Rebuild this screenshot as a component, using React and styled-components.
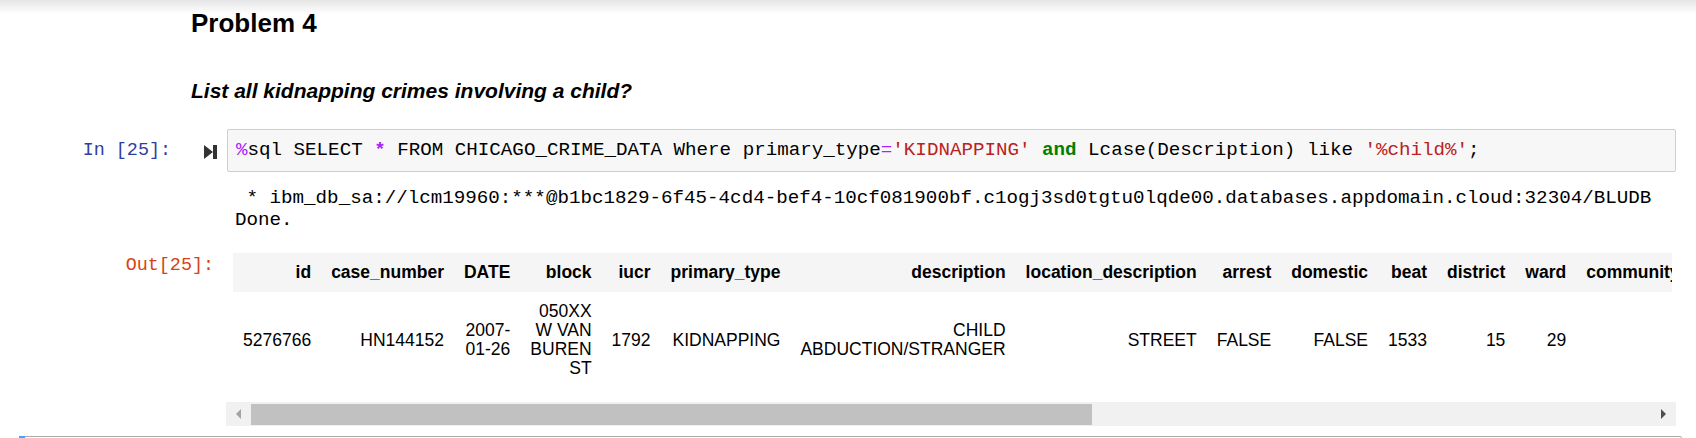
import React from 'react'
import styled, { createGlobalStyle } from 'styled-components'

const columns = [
  'id', 'case_number', 'DATE', 'block', 'iucr', 'primary_type', 'description',
  'location_description', 'arrest', 'domestic', 'beat', 'district', 'ward',
  'community_area_number', 'fbicode', 'x_coordinate', 'y_coordinate', 'year',
  'updatedon', 'latitude', 'longitude', 'location'
]

const App = () => {
  return (
    <>
      <GlobalStyle />
      <HeaderShadow />
      <Notebook>
        <MarkdownCell>
          <Heading>Problem 4</Heading>
          <Question>List all kidnapping crimes involving a child?</Question>
        </MarkdownCell>

        <CodeCell>
          <Row>
            <InPrompt>
              <span>In [25]:</span>
              <RunIcon viewBox="0 0 13 14" width="13" height="14">
                <polygon points="0,0 9,7 0,14" fill="#333" />
                <rect x="9" y="0" width="4" height="14" fill="#333" />
              </RunIcon>
            </InPrompt>
            <CodeBox>
              <Magic>%</Magic>sql SELECT <Op>*</Op> FROM CHICAGO_CRIME_DATA Where primary_type<Eq>=</Eq>
              <Str>'KIDNAPPING'</Str> <Kw>and</Kw> Lcase(Description) like <Str>'%child%'</Str>;
            </CodeBox>
          </Row>

          <StreamRow>
            <div />
            <Stream>{` * ibm_db_sa://lcm19960:***@b1bc1829-6f45-4cd4-bef4-10cf081900bf.c1ogj3sd0tgtu0lqde00.databases.appdomain.cloud:32304/BLUDB\nDone.`}</Stream>
          </StreamRow>

          <ResultRow>
            <OutPrompt>Out[25]:</OutPrompt>
            <ResultArea>
              <TableClip>
                <Table>
                  <tbody>
                    <tr>
                      {columns.map((c) => <th key={c}>{c}</th>)}
                    </tr>
                    <tr>
                      <td>5276766</td>
                      <td>HN144152</td>
                      <td>2007-<wbr />01-26</td>
                      <td>050XX W VAN BUREN ST</td>
                      <td>1792</td>
                      <td>KIDNAPPING</td>
                      <td>CHILD <NoWrap>ABDUCTION/STRANGER</NoWrap></td>
                      <td>STREET</td>
                      <td>FALSE</td>
                      <td>FALSE</td>
                      <td>1533</td>
                      <td>15</td>
                      <td>29</td>
                      <td>25</td>
                      <td>20</td>
                      <td>1143012</td>
                      <td>1897633</td>
                      <td>2007</td>
                      <td>2018-<wbr />02-28</td>
                      <td>41.875</td>
                      <td>-87.754</td>
                      <td>(41.875, -87.754)</td>
                    </tr>
                  </tbody>
                </Table>
              </TableClip>
              <ScrollBar>
                <ScrollButton>
                  <svg viewBox="0 0 5 10" width="5" height="10">
                    <polygon points="5,0 0,5 5,10" fill="#a3a3a3" />
                  </svg>
                </ScrollButton>
                <Track>
                  <Thumb />
                </Track>
                <ScrollButton>
                  <svg viewBox="0 0 5 10" width="5" height="10">
                    <polygon points="0,0 5,5 0,10" fill="#505050" />
                  </svg>
                </ScrollButton>
              </ScrollBar>
            </ResultArea>
          </ResultRow>
        </CodeCell>

        <SelectedCell />
      </Notebook>
    </>
  )
}

export default App

const mono = `"Liberation Mono", "DejaVu Sans Mono", monospace`

const GlobalStyle = createGlobalStyle`
  html, body {
    margin: 0;
    padding: 0;
    background: #fff;
  }
  body {
    height: 438px;
    overflow: hidden;
    font-family: "Liberation Sans", Arial, sans-serif;
    color: #000;
  }
`

const HeaderShadow = styled.div`
  position: fixed;
  top: 0;
  left: 0;
  right: 0;
  height: 14px;
  background: linear-gradient(to bottom, rgba(0, 0, 0, 0.1), rgba(0, 0, 0, 0));
  pointer-events: none;
  z-index: 5;
`

const Notebook = styled.div`
  width: 1663px;
  margin-left: 19px;
  padding-top: 8px;
`

const MarkdownCell = styled.div`
  padding-left: 172px;
`

const Heading = styled.h2`
  margin: 0;
  font-size: 26px;
  line-height: 30px;
  font-weight: 700;
`

const Question = styled.h4`
  margin: 41px 0 0;
  font-size: 21px;
  line-height: 24px;
  font-weight: 700;
  font-style: italic;
`

const CodeCell = styled.div`
  margin-top: 20px;
  padding: 5px;
  border: 1px solid transparent;
  border-radius: 2px;
`

const Row = styled.div`
  display: grid;
  grid-template-columns: 202px minmax(0, 1fr);
`

const InPrompt = styled.div`
  display: flex;
  justify-content: flex-end;
  align-items: center;
  gap: 33px;
  padding-right: 10px;
  font-family: ${mono};
  font-size: 18.4px;
  line-height: 22px;
  color: #303f9f;
  white-space: pre;
`

const RunIcon = styled.svg`
  display: block;
  margin-top: 2px;
`

const CodeBox = styled.div`
  background: #f7f7f7;
  border: 1px solid #cfcfcf;
  border-radius: 2px;
  padding: 9px 8px;
  font-family: ${mono};
  font-size: 19.2px;
  line-height: 23px;
  color: #000;
  white-space: pre;
  overflow: hidden;
`

const Magic = styled.span`
  color: #aa22ff;
`

const Op = styled.span`
  color: #aa22ff;
  font-weight: 700;
`

const Eq = styled.span`
  color: #aa22ff;
`

const Str = styled.span`
  color: #ba2121;
`

const Kw = styled.span`
  color: #008000;
  font-weight: 700;
`

const StreamRow = styled(Row)`
  padding-top: 15px;
`

const Stream = styled.div`
  padding-left: 8px;
  font-family: ${mono};
  font-size: 19.2px;
  line-height: 22px;
  white-space: pre;
  color: #000;
`

const ResultRow = styled(Row)`
  margin-top: 22px;
`

const OutPrompt = styled.div`
  align-self: start;
  text-align: right;
  padding: 2px 13px 0 0;
  font-family: ${mono};
  font-size: 18.4px;
  line-height: 22px;
  color: #d84315;
`

const ResultArea = styled.div`
  min-width: 0;
  margin-left: -1px;
`

const TableClip = styled.div`
  margin: 0 4px 0 7px;
  padding-bottom: 14px;
  overflow: hidden;
`

const Table = styled.table`
  border-collapse: collapse;
  border-spacing: 0;
  font-family: "Liberation Sans", Arial, sans-serif;
  font-size: 17.5px;
  color: #000;

  th, td {
    padding: 10px;
    text-align: right;
    vertical-align: middle;
    line-height: 19px;
  }

  th {
    font-weight: 700;
  }

  tr:first-child {
    background: #f5f5f5;
  }
`

const NoWrap = styled.span`
  white-space: nowrap;
`

const ScrollBar = styled.div`
  display: flex;
  height: 24px;
  background: #f1f1f1;
`

const ScrollButton = styled.div`
  flex: none;
  width: 25px;
  display: flex;
  align-items: center;
  justify-content: center;

  svg {
    display: block;
  }
`

const Track = styled.div`
  flex: 1;
  display: flex;
  align-items: center;
`

const Thumb = styled.div`
  width: 841px;
  height: 21px;
  background: #c1c1c1;
`

const SelectedCell = styled.div`
  position: relative;
  margin-top: 4px;
  height: 80px;
  border: 1px solid #ababab;
  border-radius: 2px;

  &::before {
    content: '';
    position: absolute;
    top: -1px;
    left: -1px;
    width: 6px;
    height: calc(100% + 2px);
    background: #42a5f5;
  }
`
